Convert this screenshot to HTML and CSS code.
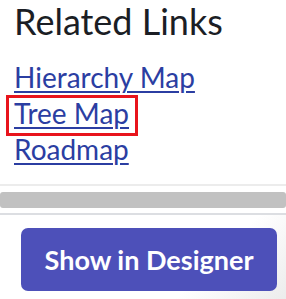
FILE: index.html
```html
<!DOCTYPE html>
<html lang="en">
<head>
    <meta charset="UTF-8">
    <meta name="viewport" content="width=device-width, initial-scale=1.0">
    <title>Related Links</title>
    <link rel="stylesheet" href="styles.css">
</head>
<body>
    <section class="related">
        <h2>Related Links</h2>
        <ul class="links">
            <li><a href="#">Hierarchy Map</a></li>
            <li><span class="selected"><a href="#">Tree Map</a></span></li>
            <li><a href="#">Roadmap</a></li>
        </ul>
    </section>
    <div class="scroller">
        <div class="thumb"></div>
    </div>
    <footer>
        <button type="button">Show in Designer</button>
    </footer>
</body>
</html>
```

FILE: styles.css
```css
body {
    font-family: Lato, "Open Sans", sans-serif;
    margin: 0;
    padding: 0;
    background-color: #fff;
    color: #1b1e25;
}
.related {
    padding: 0 14px;
}
h2 {
    margin: 0;
    font-size: 36px;
    font-weight: normal;
    line-height: 1.2;
}
.links {
    list-style: none;
    margin: 16px 0 0;
    padding: 0;
}
.links li {
    font-size: 28px;
    line-height: 36px;
}
.links a {
    color: #2b3ea2;
    text-decoration: underline;
    text-decoration-thickness: 2px;
    text-underline-offset: 3px;
}
.selected {
    display: inline-block;
    line-height: 30px;
    margin: -1px 0 -7px -8px;
    padding: 0 6px 5px 5px;
    border: 3px solid #e8141c;
}
.scroller {
    margin-top: 17px;
    border-top: 2px solid #ececec;
    padding: 6px 0 5px;
}
.thumb {
    height: 16px;
    background-color: #c1c1c1;
    border-radius: 3px;
}
footer {
    border-top: 2px solid #dcdee2;
    padding: 13px 9px 8px 21px;
    background: linear-gradient(135deg, #fff 70%, #ececec 100%);
}
button {
    width: 256px;
    height: 63px;
    padding: 0;
    background-color: #4d50b9;
    color: #fff;
    border: none;
    border-radius: 7px;
    font-family: Lato, sans-serif;
    font-weight: bold;
    font-size: 27px;
    cursor: pointer;
}
```
